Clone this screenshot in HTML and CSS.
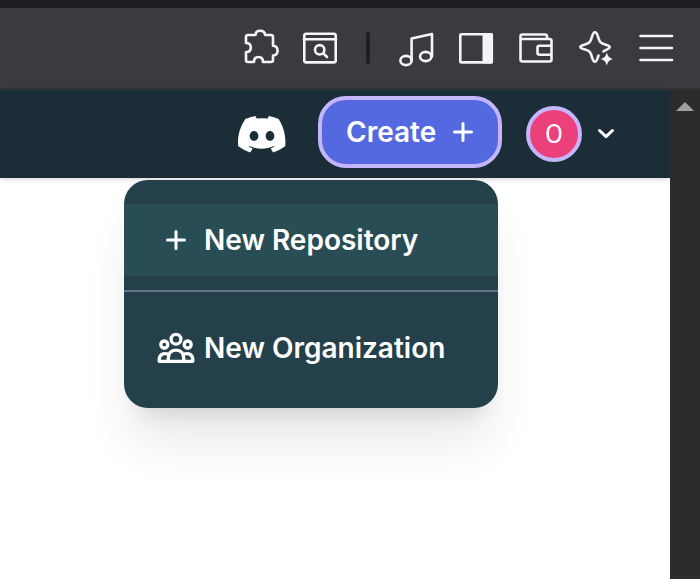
FILE: index.html
```html
<!DOCTYPE html>
<html lang="en">
<head>
<meta charset="utf-8">
<title>Create menu</title>
<link rel="stylesheet" href="styles.css">
</head>
<body>
<div class="tabstrip"></div>
<div class="toolbar">
  <svg class="tool" viewBox="240 28 40 40"><path d="M248 35H255.500c0-3 2-4.200 4.700-4.200s4.800 1.200 4.800 4.200H271a2 2 0 0 1 2 2V45.800c3.200.3 4.600 2.300 4.600 4.900s-1.400 4.600-4.600 4.900V60a2 2 0 0 1-2 2H263c0-3.500-1.800-5-4.500-5s-4.500 1.500-4.500 5H248a2 2 0 0 1-2-2V52.200c3.300 0 4.800-2 4.800-4.600s-1.500-4.600-4.800-4.600V37a2 2 0 0 1 2-2z"/></svg>
  <svg class="tool" viewBox="300 28 40 40"><rect x="304.300" y="33.700" width="31.400" height="28.700" rx="2"/><path d="M304 39.300H336M323.500 53.500L327 57"/><circle cx="319.700" cy="49.800" r="4.700"/></svg>
  <div class="separator"></div>
  <svg class="tool music" viewBox="397 28 40 40"><ellipse cx="406" cy="60.500" rx="5.600" ry="4.600"/><ellipse cx="425.700" cy="56.500" rx="5.600" ry="4.600"/><path d="M411.600 60.500V38.500L432 34V56.500"/></svg>
  <svg class="tool" viewBox="456 28 40 40"><rect x="460.300" y="34.200" width="31.500" height="28.200" rx="1"/><path class="solid" d="M482.500 33H491.500a1.500 1.500 0 0 1 1.500 1.500V62a1.500 1.500 0 0 1-1.500 1.500H482.500z"/></svg>
  <svg class="tool" viewBox="516 28 40 40"><path d="M547 38.800V36.500a2 2 0 0 0-2-2H522.500a2 2 0 0 0-2 2V59.500a2 2 0 0 0 2 2H549.500a2 2 0 0 0 2-2V41a2 2 0 0 0-2-2H521M551.500 45.700H539.500a2 2 0 0 0-2 2V52.800a2 2 0 0 0 2 2H551.500"/></svg>
  <svg class="tool" viewBox="576 28 40 40"><path d="M603.500 51.300C606.500 49.500 609.700 49 609.700 47C609.700 44.500 602.500 45 600.200 42C597.500 38.500 598 32.300 595 32.300S592.500 38.500 589.800 42C587.500 45 580.300 44.500 580.300 47S587.500 49 589.800 52C592.500 55.500 592 61.700 595 61.700C597 61.700 597.300 58.500 598.500 55.500"/><path class="solid" d="M606.800 52.500c1.300 4 2 5 6.200 6.500c-4.200 1.500-4.900 2.500-6.200 6.500c-1.300-4-2-5-6.200-6.500c4.200-1.500 4.900-2.500 6.200-6.500z"/></svg>
  <svg class="tool" viewBox="636 28 40 40"><path d="M640.500 36H672M640.500 48H672M640.500 60H672"/></svg>
</div>
<div class="viewport">
  <div class="page">
    <header class="header">
      <svg class="discord" viewBox="0 0 24 18.300" preserveAspectRatio="none"><path d="M20.317 1.492A19.800 19.800 0 0 0 15.432 0c-.210.375-.444.880-.608 1.275a18.270 18.270 0 0 0-5.487 0A12.600 12.600 0 0 0 8.720 0 19.700 19.700 0 0 0 3.677 1.492C.533 6.093-.320 10.580.099 15.002a19.900 19.900 0 0 0 5.993 3.030c.462-.630.874-1.295 1.226-1.994a13.100 13.100 0 0 1-1.872-.892l.372-.292c3.928 1.793 8.180 1.793 12.062 0l.373.292a12.300 12.300 0 0 1-1.873.892c.360.698.772 1.362 1.225 1.993a19.840 19.840 0 0 0 6.002-3.029c.500-5.177-.838-9.674-3.290-13.510zM8.020 12.278c-1.183 0-2.157-1.085-2.157-2.419s.955-2.419 2.157-2.419c1.210 0 2.176 1.094 2.157 2.419 0 1.334-.956 2.419-2.157 2.419zm7.975 0c-1.183 0-2.157-1.085-2.157-2.419s.955-2.419 2.157-2.419c1.210 0 2.176 1.094 2.157 2.419 0 1.334-.946 2.419-2.157 2.419z"/></svg>
      <button class="create">Create<svg class="plus" viewBox="0 0 20 20"><path d="M10 1.500V18.500M1.500 10H18.500"/></svg></button>
      <div class="avatar">O</div>
      <svg class="chevron" viewBox="0 0 18 12"><path d="M2.500 2.500L9 8.700L15.500 2.500"/></svg>
    </header>
    <nav class="menu">
      <a class="item active"><span class="icon"><svg class="plus" viewBox="0 0 20 20"><path d="M10 1.500V18.500M1.500 10H18.500"/></svg></span>New Repository</a>
      <hr class="divider">
      <a class="item"><span class="icon"><svg class="people" viewBox="156 331 40 34"><circle cx="176" cy="339.200" r="4.900"/><circle cx="164.300" cy="344.500" r="3.500"/><circle cx="187.700" cy="344.500" r="3.500"/><path d="M168.200 361V358.500C168.200 353.500 171 350.200 176 350.200S183.800 353.500 183.800 358.500V361M168 354C163 352.500 159.200 355 159.200 359.500V361.300H192.800V359.500C192.800 355 189 352.500 184 354"/></svg></span>New Organization</a>
    </nav>
  </div>
  <div class="scrollbar"><svg class="arrow" viewBox="0 0 18 9"><path d="M9 0L18 9H0z"/></svg></div>
</div>
</body>
</html>
```
FILE: styles.css
```css
* { box-sizing: border-box; }
body {
  margin: 0;
  height: 579px;
  overflow: hidden;
  display: flex;
  flex-direction: column;
  background: #fff;
  color: #fff;
  font-family: Inter, sans-serif;
}
svg { display: block; flex: none; }
.tabstrip { height: 8px; background: #1f1e25; }
.toolbar {
  height: 82px;
  padding: 0 24px 0 0;
  display: flex;
  align-items: center;
  justify-content: flex-end;
  gap: 20px;
  background: #3b3a3f;
  border-bottom: 2px solid #313136;
}
.tool {
  width: 40px;
  height: 40px;
  fill: none;
  stroke: #f3f4f8;
  stroke-width: 2.6;
  stroke-linecap: round;
  stroke-linejoin: round;
}
.tool .solid { fill: #f3f4f8; stroke: none; }
.music { margin-right: -1px; }
.separator { width: 4px; height: 32px; margin: 0 7px 0 6px; border-radius: 2px; background: #1f1e25; }
.viewport { flex: 1; display: flex; }
.page { flex: 1; }
.header {
  height: 88px;
  padding: 0 55px 4px 0;
  display: flex;
  align-items: center;
  justify-content: flex-end;
  background: #1b2d36;
  box-shadow: 0 2px 6px rgba(0, 0, 0, .1), 0 2px 4px -2px rgba(0, 0, 0, .1);
}
.discord { width: 48px; height: 37px; margin: 5px 32px 0 0; fill: #fff; }
.create {
  width: 184px;
  height: 72px;
  margin: 0 24px 0 0;
  padding: 0 24px;
  display: flex;
  align-items: center;
  gap: 17px;
  border: 4px solid #c4b5fd;
  border-radius: 28px;
  background: #5468df;
  color: #fff;
  font: 600 28px/40px Inter, sans-serif;
}
.plus { width: 20px; height: 20px; fill: none; stroke: #fff; stroke-width: 3; stroke-linecap: round; }
.avatar {
  width: 56px;
  height: 56px;
  margin: 4px 15px 0 0;
  border: 4px solid #c4b5fd;
  border-radius: 50%;
  background: #ec407a;
  font: 400 26px/48px Roboto, sans-serif;
  text-align: center;
}
.chevron { width: 18px; height: 12px; margin-top: 3px; fill: none; stroke: #fff; stroke-width: 3; stroke-linecap: round; stroke-linejoin: round; }
.menu {
  width: 374px;
  height: 228px;
  margin: 2px 0 0 124px;
  padding: 24px 0;
  border-radius: 24px;
  background: #24404b;
  box-shadow: 0 40px 50px -10px rgba(0, 0, 0, .1), 0 16px 20px -12px rgba(0, 0, 0, .1);
}
.item {
  height: 72px;
  padding-left: 32px;
  display: flex;
  align-items: center;
  gap: 8px;
  font-size: 28px;
  font-weight: 600;
  line-height: 40px;
}
.active { background: #294d55; }
.icon { width: 40px; display: flex; justify-content: center; }
.people { width: 40px; height: 34px; fill: none; stroke: #fff; stroke-width: 3.3; stroke-linejoin: round; }
.divider { height: 2px; margin: 14px 0 20px; border: 0; background: #64748b; }
.scrollbar { width: 30px; padding-top: 12px; display: flex; justify-content: center; background: #2c2c2c; }
.arrow { width: 18px; height: 9px; fill: #9f9f9f; }
```
